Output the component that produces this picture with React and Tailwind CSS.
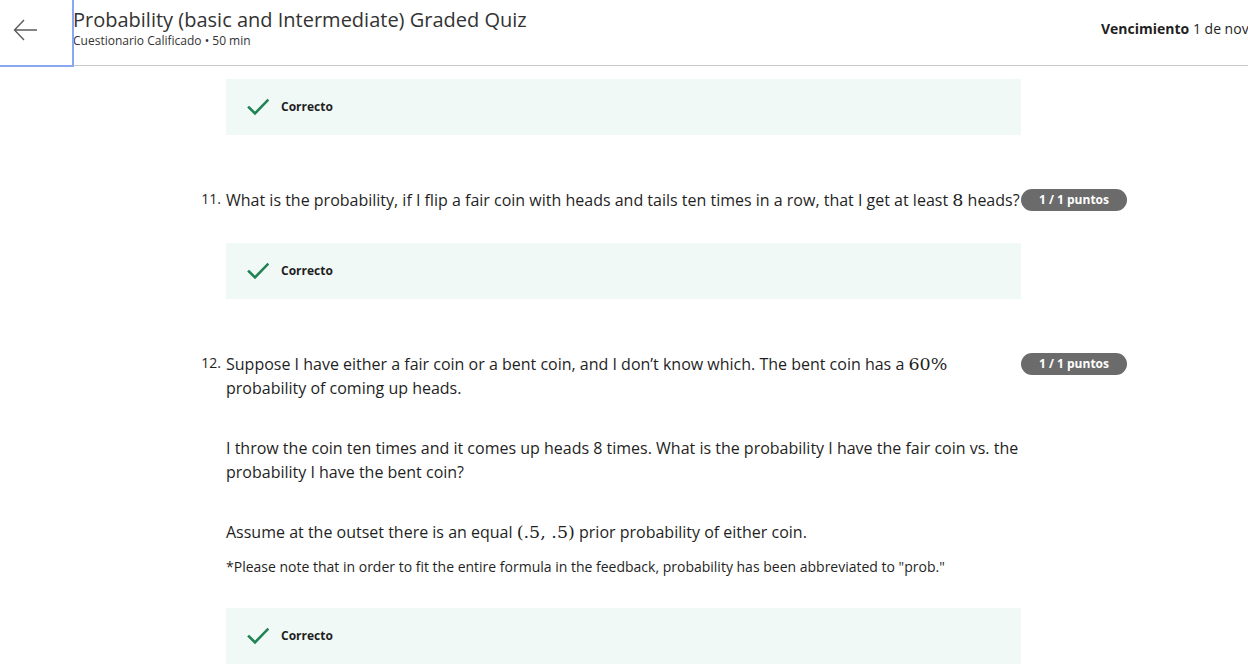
import React from 'react'

const FONT = { fontFamily: '"Open Sans", "Noto Sans", sans-serif' }

function Math({ children }) {
  return (
    <span className="text-[17.5px] leading-[0]" style={{ fontFamily: '"DejaVu Serif", "Liberation Serif", serif' }}>
      {children}
    </span>
  )
}

function Check() {
  return (
    <svg width="22" height="18" viewBox="0 0 22 18" fill="none">
      <path d="M2 9.5 L8 15.5 L20.5 2.5" stroke="#1f8354" strokeWidth="2.6" strokeLinecap="square" />
    </svg>
  )
}

function Feedback() {
  return (
    <div className="ml-[226px] w-[795px] h-[56px] bg-[#f1f9f6] flex items-center gap-3 pl-[21px]">
      <Check />
      <span className="text-[12px] font-bold text-[#1f1f1f]">Correcto</span>
    </div>
  )
}

function Badge() {
  return (
    <span className="shrink-0 mt-[1px] h-[22px] w-[106px] rounded-full bg-[#6b6b6b] text-white text-[12px] font-bold flex items-center justify-center">
      1 / 1 puntos
    </span>
  )
}

function Question({ num, nowrap, children }) {
  return (
    <div className="flex items-start ml-[196px]">
      <span className="w-[30px] shrink-0 text-right pr-[5px] text-[14px] leading-[22px] text-[#1f1f1f]">{num}.</span>
      <div className={`w-[795px] shrink-0 text-[16px] leading-[24px] text-[#1f1f1f] ${nowrap ? 'whitespace-nowrap' : ''}`}>
        {children}
      </div>
      <Badge />
    </div>
  )
}

export default function App() {
  return (
    <div className="w-[1248px] h-[664px] overflow-hidden bg-white" style={FONT}>
      <header className="h-[66px] border-b border-[#c9c9c9] flex items-start relative">
        <button className="w-[74px] h-[67px] shrink-0 border-r-[2px] border-b-[2px] border-[#8aa7f4] flex items-center justify-center pr-[20px] pb-[6px] bg-white relative z-10">
          <svg width="28" height="28" viewBox="0 0 28 28" fill="none">
            <path d="M25 14 H3 M12 4 L2.5 14 L12 24" stroke="#5b5b5b" strokeWidth="1.4" />
          </svg>
        </button>
        <div className="flex flex-col pt-[6px] -ml-[1px]">
          <h1 className="text-[20px] leading-[28px] text-[#333]">Probability (basic and Intermediate) Graded Quiz</h1>
          <span className="text-[12px] leading-[16px] text-[#333] -mt-[1px]">Cuestionario Calificado • 50 min</span>
        </div>
        <div className="ml-auto pt-[18px] w-[147px] whitespace-nowrap overflow-hidden text-[14px] leading-[22px] text-[#1f1f1f]">
          <span className="font-bold">Vencimiento</span> 1 de nov
        </div>
      </header>

      <div className="pt-[13px] flex flex-col">
        <Feedback />
        <div className="mt-[53px]">
          <Question num="11" nowrap>
            What is the probability, if I flip a fair coin with heads and tails ten times in a row, that I get at least <Math>8</Math> heads?
          </Question>
        </div>
        <div className="mt-[31px]">
          <Feedback />
        </div>
        <div className="mt-[53px]">
          <Question num="12">
            <p className="pr-[72px]">
              Suppose I have either a fair coin or a bent coin, and I don’t know which. The bent coin has a <Math>60%</Math> probability of coming up heads.
            </p>
            <p className="mt-[36px]">
              I throw the coin ten times and it comes up heads 8 times. What is the probability I have the fair coin vs. the probability I have the bent coin?
            </p>
            <p className="mt-[36px]">
              Assume at the outset there is an equal <Math>(.5, .5)</Math> prior probability of either coin.
            </p>
            <p className="mt-[13px] text-[14px] leading-[20px]">
              *Please note that in order to fit the entire formula in the feedback, probability has been abbreviated to "prob."
            </p>
          </Question>
        </div>
        <div className="mt-[31px]">
          <Feedback />
        </div>
      </div>
    </div>
  )
}
